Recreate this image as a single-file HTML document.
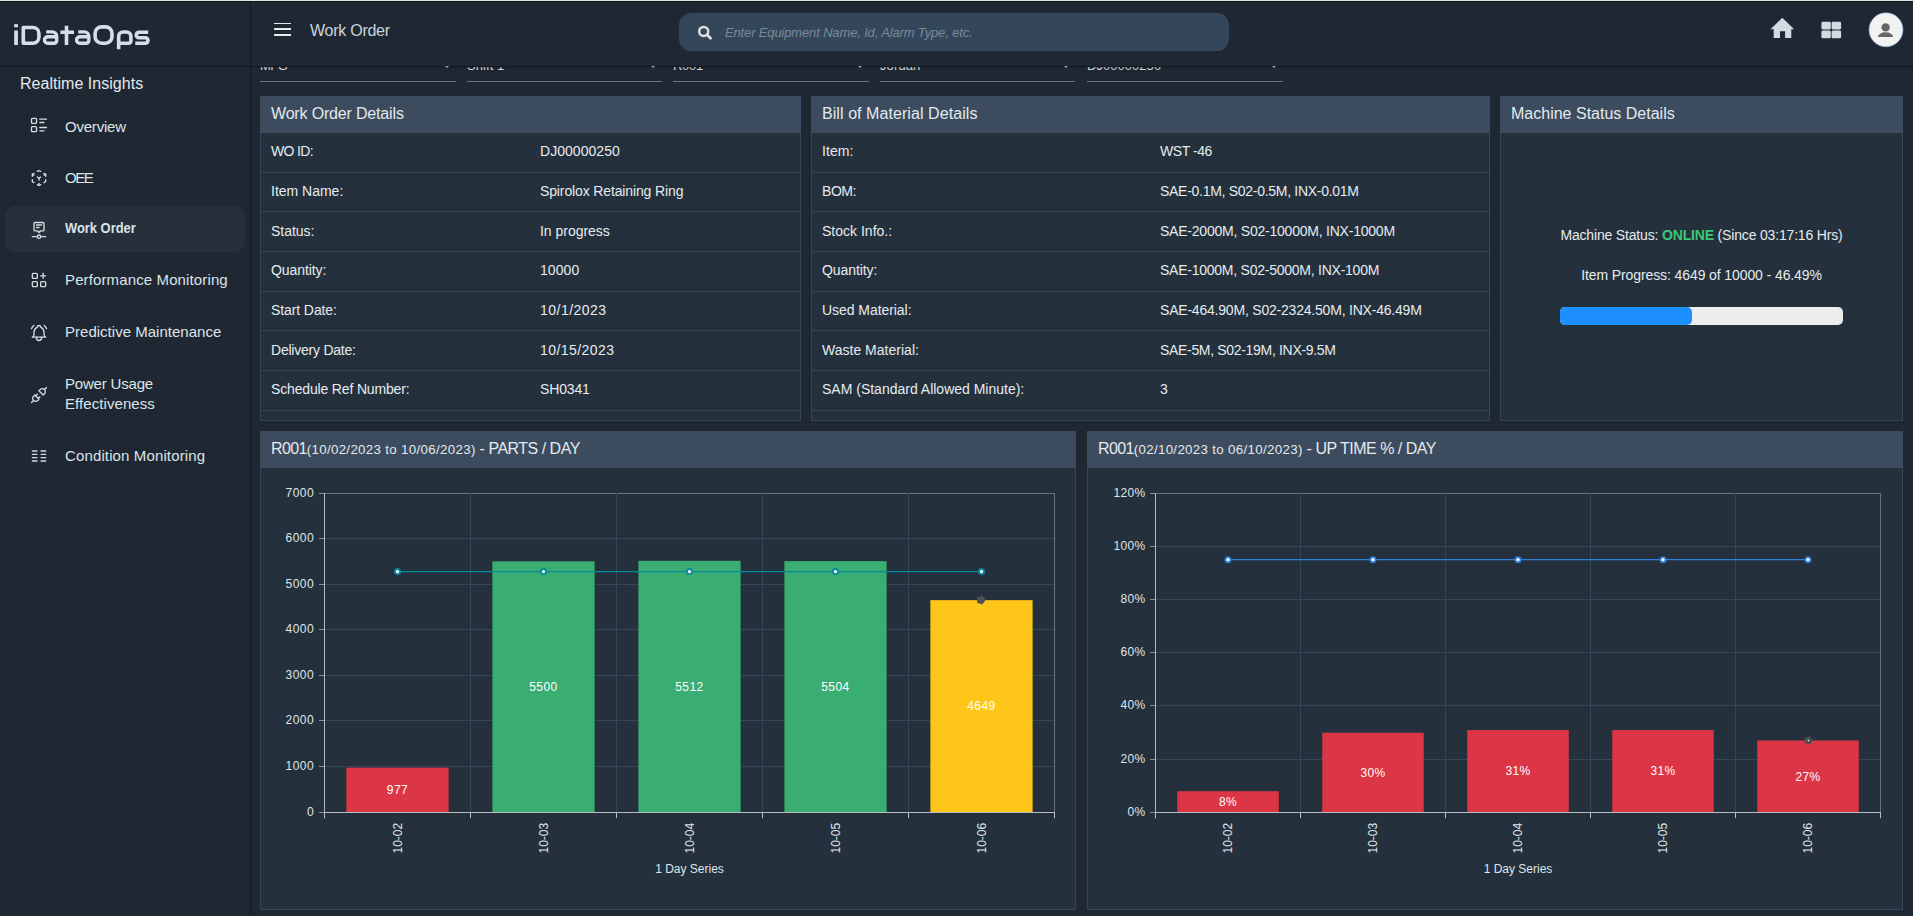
<!DOCTYPE html>
<html><head><meta charset="utf-8"><style>
*{box-sizing:border-box;margin:0;padding:0}
html,body{width:1913px;height:916px;overflow:hidden;background:#1f2832;font-family:"Liberation Sans",sans-serif;color:#dfe6ec}
.a{position:absolute}
.t{position:absolute;line-height:1;white-space:nowrap}
svg text{font-family:"Liberation Sans",sans-serif}
</style></head><body>
<div class="a" style="left:0;top:0;width:1913px;height:1px;background:#e4e4e4"></div>
<div class="a" style="left:0;top:1px;width:1913px;height:1px;background:#10151b"></div>
<div class="t" style="left:260px;top:59.00px;font-size:13px;color:#cfd6dd;letter-spacing:-0.497px">MFG</div>

<div class="a" style="left:260px;top:81px;width:196px;height:1px;background:#6b7580"></div>
<div class="t" style="left:467px;top:59.00px;font-size:13px;color:#cfd6dd;letter-spacing:0.070px">Shift 1</div>

<div class="a" style="left:467px;top:81px;width:195px;height:1px;background:#6b7580"></div>
<div class="t" style="left:673px;top:59.00px;font-size:13px;color:#cfd6dd;letter-spacing:-0.287px">R001</div>

<div class="a" style="left:673px;top:81px;width:196px;height:1px;background:#6b7580"></div>
<div class="t" style="left:880px;top:59.00px;font-size:13px;color:#cfd6dd;letter-spacing:0.118px">Jordan</div>

<div class="a" style="left:880px;top:81px;width:195px;height:1px;background:#6b7580"></div>
<div class="t" style="left:1087px;top:59.00px;font-size:13px;color:#cfd6dd;letter-spacing:0.043px">DJ00000250</div>

<div class="a" style="left:1087px;top:81px;width:196px;height:1px;background:#6b7580"></div>
<div class="a" style="left:0;top:2px;width:250px;height:914px;background:#1f2832"></div>
<div class="a" style="left:250px;top:2px;width:1px;height:914px;background:#141a21"></div>
<div class="a" style="left:251px;top:2px;width:1662px;height:64px;background:#1f2832"></div>
<div class="a" style="left:0;top:66px;width:1913px;height:1px;background:#121820"></div>
<div class="a" style="left:251px;top:67px;width:1662px;height:1px;background:rgba(0,0,0,0.12)"></div>
<div class="a" style="left:442px;top:66px;width:10px;height:4px;overflow:hidden"><div class="a" style="left:0;top:-2.7px;width:0;height:0;border-left:5px solid transparent;border-right:5px solid transparent;border-top:5px solid #98a1aa"></div></div>
<div class="a" style="left:648px;top:66px;width:10px;height:4px;overflow:hidden"><div class="a" style="left:0;top:-2.7px;width:0;height:0;border-left:5px solid transparent;border-right:5px solid transparent;border-top:5px solid #98a1aa"></div></div>
<div class="a" style="left:855px;top:66px;width:10px;height:4px;overflow:hidden"><div class="a" style="left:0;top:-2.7px;width:0;height:0;border-left:5px solid transparent;border-right:5px solid transparent;border-top:5px solid #98a1aa"></div></div>
<div class="a" style="left:1061px;top:66px;width:10px;height:4px;overflow:hidden"><div class="a" style="left:0;top:-2.7px;width:0;height:0;border-left:5px solid transparent;border-right:5px solid transparent;border-top:5px solid #98a1aa"></div></div>
<div class="a" style="left:1269px;top:66px;width:10px;height:4px;overflow:hidden"><div class="a" style="left:0;top:-2.7px;width:0;height:0;border-left:5px solid transparent;border-right:5px solid transparent;border-top:5px solid #98a1aa"></div></div>
<svg class="a" style="left:0;top:0" width="160" height="60" viewBox="0 0 160 60">
<g fill="none" stroke="#d6dfe7" stroke-width="3.6" stroke-linejoin="round">
<path d="M23.3,27.5 H33 A5.9,5.9 0 0 1 38.9,33.4 V37.3 A5.9,5.9 0 0 1 33,43.2 H23.3 Z"/>
<path stroke-width="3.4" d="M46.2,31.9 H52.2 A4.5,4.5 0 0 1 56.7,36.4 V40.6 A2.7,2.7 0 0 1 54,43.3 H47.8 A3.3,3.3 0 0 1 47.8,36.7 H56.7"/>
<path d="M66.5,25.7 V45 M60.4,32.2 H74"/>
<path stroke-width="3.4" d="M78.3,31.9 H84.3 A4.5,4.5 0 0 1 88.8,36.4 V40.6 A2.7,2.7 0 0 1 86.1,43.3 H79.9 A3.3,3.3 0 0 1 79.9,36.7 H88.8"/>
<path d="M101.6,26.9 H105.5 A6.5,6.5 0 0 1 112,33.4 V36.7 A6.5,6.5 0 0 1 105.5,43.2 H101.6 A6.5,6.5 0 0 1 95.1,36.7 V33.4 A6.5,6.5 0 0 1 101.6,26.9 Z"/>
<path d="M118.65,49.2 V36.4 A4.4,4.4 0 0 1 123,32 H126.5 A4.4,4.4 0 0 1 130.9,36.4 V41 A2.2,2.2 0 0 1 128.7,43.2 H118.65"/>
<path d="M148.2,32.3 H139 A2.75,2.75 0 0 0 139,37.8 H145.3 A2.7,2.7 0 0 1 145.3,43.2 H135.3"/>
</g>
<g fill="#d6dfe7"><rect x="14.2" y="24.1" width="3.7" height="3.2"/><rect x="14.2" y="30.5" width="3.7" height="14.5"/></g>
</svg>
<div class="t" style="left:20px;top:75.66px;font-size:16px;color:#e2e8ee;letter-spacing:0.027px">Realtime Insights</div>

<div class="a" style="left:5px;top:206px;width:240px;height:46px;background:#25303b;border-radius:11px"></div>
<div class="t" style="left:65px;top:118.60px;font-size:15px;color:#dce3ea;letter-spacing:-0.214px">Overview</div>

<div class="t" style="left:65px;top:170.30px;font-size:15px;color:#dce3ea;letter-spacing:-1.435px">OEE</div>

<div class="t" style="left:65px;top:221.05px;font-size:14px;color:#dce3ea;font-weight:bold;letter-spacing:0;transform:scaleX(0.922);transform-origin:0 0">Work Order</div>

<div class="t" style="left:65px;top:272.00px;font-size:15px;color:#dce3ea;letter-spacing:0.125px">Performance Monitoring</div>

<div class="t" style="left:65px;top:324.30px;font-size:15px;color:#dce3ea;letter-spacing:0.017px">Predictive Maintenance</div>

<div class="t" style="left:65px;top:376.20px;font-size:15px;color:#dce3ea;letter-spacing:-0.190px">Power Usage</div>

<div class="t" style="left:65px;top:395.70px;font-size:15px;color:#dce3ea;letter-spacing:0.070px">Effectiveness</div>

<div class="t" style="left:65px;top:448.20px;font-size:15px;color:#dce3ea;letter-spacing:0.129px">Condition Monitoring</div>

<svg class="a" style="left:29.2px;top:115.2px" width="20" height="20" viewBox="0 0 24 24"><g fill="none" stroke="#d4dbe2" stroke-width="1.6" stroke-linecap="round" stroke-linejoin="round"><path d="M13 5h8"/><path d="M13 9h5"/><path d="M13 15h8"/><path d="M13 19h5"/><path d="M3 5a1 1 0 0 1 1 -1h4a1 1 0 0 1 1 1v4a1 1 0 0 1 -1 1h-4a1 1 0 0 1 -1 -1z"/><path d="M3 15a1 1 0 0 1 1 -1h4a1 1 0 0 1 1 1v4a1 1 0 0 1 -1 1h-4a1 1 0 0 1 -1 -1z"/></g></svg>
<svg class="a" style="left:29.3px;top:167.5px" width="20" height="20" viewBox="0 0 24 24"><g fill="none" stroke="#d4dbe2" stroke-width="1.6" stroke-linecap="round" stroke-linejoin="round"><path d="M6 17.6l-2 -1.1v-2.5"/><path d="M4 10v-2.5l2 -1.1"/><path d="M10 4.1l2 -1.1l2 1.1"/><path d="M18 6.4l2 1.1v2.5"/><path d="M20 14v2.5l-2 1.12"/><path d="M14 19.9l-2 1.1l-2 -1.1"/><path d="M12 12l2 -1.1"/><path d="M18 8.6l2 -1.1"/><path d="M12 12l0 2.5"/><path d="M12 18.5l0 2.5"/><path d="M12 12l-2 -1.12"/><path d="M6 8.6l-2 -1.1"/></g></svg>
<svg class="a" style="left:29.3px;top:219.5px" width="20" height="20" viewBox="0 0 24 24"><g fill="none" stroke="#d4dbe2" stroke-width="1.6" stroke-linecap="round" stroke-linejoin="round"><path d="M10 20a2 2 0 1 0 4 0a2 2 0 1 0 -4 0"/><path d="M10 20h-6"/><path d="M14 20h6"/><path d="M12 15l-2 -2h-3a1 1 0 0 1 -1 -1v-8a1 1 0 0 1 1 -1h10a1 1 0 0 1 1 1v8a1 1 0 0 1 -1 1h-3l-2 2z"/><path d="M9 6h6"/><path d="M9 9h3"/></g></svg>
<svg class="a" style="left:29.2px;top:270.4px" width="20" height="20" viewBox="0 0 24 24"><g fill="none" stroke="#d4dbe2" stroke-width="1.6" stroke-linecap="round" stroke-linejoin="round"><path d="M4 5a1 1 0 0 1 1 -1h4a1 1 0 0 1 1 1v4a1 1 0 0 1 -1 1h-4a1 1 0 0 1 -1 -1z"/><path d="M4 15a1 1 0 0 1 1 -1h4a1 1 0 0 1 1 1v4a1 1 0 0 1 -1 1h-4a1 1 0 0 1 -1 -1z"/><path d="M14 15a1 1 0 0 1 1 -1h4a1 1 0 0 1 1 1v4a1 1 0 0 1 -1 1h-4a1 1 0 0 1 -1 -1z"/><path d="M14 7l6 0"/><path d="M17 4l0 6"/></g></svg>
<svg class="a" style="left:29.3px;top:322.5px" width="20" height="20" viewBox="0 0 24 24"><g fill="none" stroke="#d4dbe2" stroke-width="1.6" stroke-linecap="round" stroke-linejoin="round"><path d="M10 5a2 2 0 0 1 4 0a7 7 0 0 1 4 6v3a4 4 0 0 0 2 3h-16a4 4 0 0 0 2 -3v-3a7 7 0 0 1 4 -6"/><path d="M9 17v1a3 3 0 0 0 6 0v-1"/><path d="M21 6.727a11.05 11.05 0 0 0 -2.794 -3.727"/><path d="M3 6.727a11.05 11.05 0 0 1 2.792 -3.727"/></g></svg>
<svg class="a" style="left:29.4px;top:384.9px" width="20" height="20" viewBox="0 0 24 24"><g fill="none" stroke="#d4dbe2" stroke-width="1.6" stroke-linecap="round" stroke-linejoin="round"><path d="M7 12l5 5l-1.5 1.5a3.536 3.536 0 1 1 -5 -5l1.5 -1.5z"/><path d="M17 12l-5 -5l1.5 -1.5a3.536 3.536 0 1 1 5 5l-1.5 1.5z"/><path d="M3 21l2.5 -2.5"/><path d="M18.5 5.5l2.5 -2.5"/><path d="M10 11l-2 2"/><path d="M13 14l-2 2"/></g></svg>
<svg class="a" style="left:29.2px;top:446.1px" width="20" height="20" viewBox="0 0 24 24"><g fill="none" stroke="#d4dbe2" stroke-width="1.6" stroke-linecap="round" stroke-linejoin="round"><path d="M4 6l5.5 0"/><path d="M4 10l5.5 0"/><path d="M4 14l5.5 0"/><path d="M4 18l5.5 0"/><path d="M14.5 6l5.5 0"/><path d="M14.5 10l5.5 0"/><path d="M14.5 14l5.5 0"/><path d="M14.5 18l5.5 0"/></g></svg>
<div class="a" style="left:274px;top:22.9px;width:16.5px;height:1.5px;background:#e6eaee"></div>
<div class="a" style="left:274px;top:28.4px;width:16.5px;height:1.5px;background:#e6eaee"></div>
<div class="a" style="left:274px;top:34.1px;width:16.5px;height:1.5px;background:#e6eaee"></div>
<div class="t" style="left:310px;top:22.66px;font-size:16px;color:#cbd4dc;letter-spacing:-0.259px">Work Order</div>

<div class="a" style="left:679px;top:13px;width:550px;height:38px;background:#33465a;border-radius:12px"></div>
<svg class="a" style="left:690px;top:20px" width="30" height="26" viewBox="690 20 30 26"><g fill="none" stroke="#dedede" stroke-width="2.5"><circle cx="703.7" cy="31.4" r="4.5"/><path d="M707,34.7 L710.6,38.3" stroke-linecap="round" stroke-width="2.7"/></g></svg>
<div class="t" style="left:725px;top:25.50px;font-size:13px;font-style:italic;color:#7b8998;letter-spacing:-0.145px">Enter Equipment Name, Id, Alarm Type, etc.</div>

<svg class="a" style="left:1760px;top:8px" width="153" height="50" viewBox="1760 8 153 50">
<path d="M1782.3,17.7 L1794.2,29.3 H1791.3 V38.1 H1785.1 V31.3 H1780 V38.1 H1773.7 V29.3 H1770.5 Z" fill="#d1dbe4"/>
<g fill="#d1dbe4"><rect x="1821.4" y="21.7" width="9.4" height="7.8" rx="1.4"/><rect x="1831.6" y="21.7" width="9.5" height="7.8" rx="1.4"/><rect x="1821.4" y="30.5" width="9.4" height="7.8" rx="1.4"/><rect x="1831.6" y="30.5" width="9.5" height="7.8" rx="1.4"/></g>
<circle cx="1886" cy="29.8" r="17" fill="#f2f2f2" stroke="#7fa8cf" stroke-width="0.6"/>
<circle cx="1885.6" cy="27.4" r="4.2" fill="#666"/>
<path d="M1877.9,37.1 A7.6,4.8 0 0 1 1893.1,37.1 Z" fill="#666"/>
</svg>
<div class="a" style="left:260px;top:96px;width:541px;height:325px;background:#24313c;border:1px solid #33465a"></div>
<div class="a" style="left:260px;top:96px;width:541px;height:37px;background:#3c4c5e"></div>
<div class="a" style="left:811px;top:96px;width:679px;height:325px;background:#24313c;border:1px solid #33465a"></div>
<div class="a" style="left:811px;top:96px;width:679px;height:37px;background:#3c4c5e"></div>
<div class="a" style="left:1500px;top:96px;width:403px;height:325px;background:#24313c;border:1px solid #33465a"></div>
<div class="a" style="left:1500px;top:96px;width:403px;height:37px;background:#3c4c5e"></div>
<div class="a" style="left:260px;top:431px;width:816px;height:479px;background:#24313c;border:1px solid #33465a"></div>
<div class="a" style="left:260px;top:431px;width:816px;height:37px;background:#3c4c5e"></div>
<div class="a" style="left:1087px;top:431px;width:816px;height:479px;background:#24313c;border:1px solid #33465a"></div>
<div class="a" style="left:1087px;top:431px;width:816px;height:37px;background:#3c4c5e"></div>
<div class="t" style="left:271px;top:105.56px;font-size:16px;color:#e3e9ee;letter-spacing:-0.168px">Work Order Details</div>

<div class="t" style="left:822px;top:105.56px;font-size:16px;color:#e3e9ee;letter-spacing:0.069px">Bill of Material Details</div>

<div class="t" style="left:1511px;top:105.56px;font-size:16px;color:#e3e9ee;letter-spacing:0.004px">Machine Status Details</div>

<div class="t" style="left:271px;top:144.45px;font-size:14px;color:#e6ebef;letter-spacing:-0.662px">WO ID:</div>

<div class="t" style="left:540px;top:144.45px;font-size:14px;color:#e6ebef;letter-spacing:0.046px">DJ00000250</div>

<div class="t" style="left:271px;top:184.12px;font-size:14px;color:#e6ebef;letter-spacing:-0.009px">Item Name:</div>

<div class="t" style="left:540px;top:184.12px;font-size:14px;color:#e6ebef;letter-spacing:-0.130px">Spirolox Retaining Ring</div>

<div class="t" style="left:271px;top:223.79px;font-size:14px;color:#e6ebef;letter-spacing:-0.022px">Status:</div>

<div class="t" style="left:540px;top:223.79px;font-size:14px;color:#e6ebef;letter-spacing:-0.020px">In progress</div>

<div class="t" style="left:271px;top:263.46px;font-size:14px;color:#e6ebef;letter-spacing:-0.083px">Quantity:</div>

<div class="t" style="left:540px;top:263.46px;font-size:14px;color:#e6ebef;letter-spacing:0.082px">10000</div>

<div class="t" style="left:271px;top:303.13px;font-size:14px;color:#e6ebef;letter-spacing:-0.097px">Start Date:</div>

<div class="t" style="left:540px;top:303.13px;font-size:14px;color:#e6ebef;letter-spacing:0.483px">10/1/2023</div>

<div class="t" style="left:271px;top:342.80px;font-size:14px;color:#e6ebef;letter-spacing:-0.230px">Delivery Date:</div>

<div class="t" style="left:540px;top:342.80px;font-size:14px;color:#e6ebef;letter-spacing:0.443px">10/15/2023</div>

<div class="t" style="left:271px;top:382.47px;font-size:14px;color:#e6ebef;letter-spacing:-0.157px">Schedule Ref Number:</div>

<div class="t" style="left:540px;top:382.47px;font-size:14px;color:#e6ebef;letter-spacing:-0.137px">SH0341</div>

<div class="t" style="left:822px;top:144.45px;font-size:14px;color:#e6ebef;letter-spacing:0.073px">Item:</div>

<div class="t" style="left:1160px;top:144.45px;font-size:14px;color:#e6ebef;letter-spacing:-0.440px">WST -46</div>

<div class="t" style="left:822px;top:184.12px;font-size:14px;color:#e6ebef;letter-spacing:-0.453px">BOM:</div>

<div class="t" style="left:1160px;top:184.12px;font-size:14px;color:#e6ebef;letter-spacing:-0.285px">SAE-0.1M, S02-0.5M, INX-0.01M</div>

<div class="t" style="left:822px;top:223.79px;font-size:14px;color:#e6ebef;letter-spacing:0.006px">Stock Info.:</div>

<div class="t" style="left:1160px;top:223.79px;font-size:14px;color:#e6ebef;letter-spacing:-0.224px">SAE-2000M, S02-10000M, INX-1000M</div>

<div class="t" style="left:822px;top:263.46px;font-size:14px;color:#e6ebef;letter-spacing:-0.083px">Quantity:</div>

<div class="t" style="left:1160px;top:263.46px;font-size:14px;color:#e6ebef;letter-spacing:-0.245px">SAE-1000M, S02-5000M, INX-100M</div>

<div class="t" style="left:822px;top:303.13px;font-size:14px;color:#e6ebef;letter-spacing:-0.054px">Used Material:</div>

<div class="t" style="left:1160px;top:303.13px;font-size:14px;color:#e6ebef;letter-spacing:-0.206px">SAE-464.90M, S02-2324.50M, INX-46.49M</div>

<div class="t" style="left:822px;top:342.80px;font-size:14px;color:#e6ebef;letter-spacing:0.013px">Waste Material:</div>

<div class="t" style="left:1160px;top:342.80px;font-size:14px;color:#e6ebef;letter-spacing:-0.321px">SAE-5M, S02-19M, INX-9.5M</div>

<div class="t" style="left:822px;top:382.47px;font-size:14px;color:#e6ebef;letter-spacing:-0.002px">SAM (Standard Allowed Minute):</div>

<div class="t" style="left:1160px;top:382.47px;font-size:14px;color:#e6ebef;letter-spacing:0.082px">3</div>

<div class="a" style="left:261px;top:172px;width:539px;height:1px;background:#334658"></div>
<div class="a" style="left:812px;top:172px;width:677px;height:1px;background:#334658"></div>
<div class="a" style="left:261px;top:211px;width:539px;height:1px;background:#334658"></div>
<div class="a" style="left:812px;top:211px;width:677px;height:1px;background:#334658"></div>
<div class="a" style="left:261px;top:251px;width:539px;height:1px;background:#334658"></div>
<div class="a" style="left:812px;top:251px;width:677px;height:1px;background:#334658"></div>
<div class="a" style="left:261px;top:291px;width:539px;height:1px;background:#334658"></div>
<div class="a" style="left:812px;top:291px;width:677px;height:1px;background:#334658"></div>
<div class="a" style="left:261px;top:330px;width:539px;height:1px;background:#334658"></div>
<div class="a" style="left:812px;top:330px;width:677px;height:1px;background:#334658"></div>
<div class="a" style="left:261px;top:370px;width:539px;height:1px;background:#334658"></div>
<div class="a" style="left:812px;top:370px;width:677px;height:1px;background:#334658"></div>
<div class="a" style="left:261px;top:410px;width:539px;height:1px;background:#334658"></div>
<div class="a" style="left:812px;top:410px;width:677px;height:1px;background:#334658"></div>
<div class="t" style="left:1401.50px;width:600px;text-align:center;top:228.45px;font-size:14px;color:#e6ebef;letter-spacing:-0.17px">Machine Status: <b style="color:#3ec774">ONLINE</b> (Since 03:17:16 Hrs)</div>

<div class="t" style="left:1401.50px;width:600px;text-align:center;top:268.15px;font-size:14px;color:#e6ebef;letter-spacing:-0.1px">Item Progress: 4649 of 10000 - 46.49%</div>

<div class="a" style="left:1560px;top:307px;width:283px;height:18px;background:#ececec;border-radius:5px"></div>
<div class="a" style="left:1560px;top:307px;width:132px;height:18px;background:#1e8fff;border-radius:5px"></div>
<div class="t" style="left:271px;top:441.46px;font-size:16px;color:#e3e9ee"><span style="font-size:16px;letter-spacing:-0.637px">R001</span><span style="font-size:13.3px;letter-spacing:0.328px">(10/02/2023 to 10/06/2023)</span><span style="font-size:16px;letter-spacing:-0.498px"> - PARTS / DAY</span></div>
<div class="t" style="left:1098px;top:441.46px;font-size:16px;color:#e3e9ee"><span style="font-size:16px;letter-spacing:-0.637px">R001</span><span style="font-size:13.3px;letter-spacing:0.328px">(02/10/2023 to 06/10/2023)</span><span style="font-size:16px;letter-spacing:-0.496px"> - UP TIME % / DAY</span></div>
<svg class="a" style="left:0;top:0" width="1913" height="916" viewBox="0 0 1913 916">
<line x1="324.5" y1="812.50" x2="1054.5" y2="812.50" stroke="#b9bcbf" stroke-width="1"/>
<line x1="319.0" y1="812.50" x2="324.5" y2="812.50" stroke="#8a9096" stroke-width="1"/>
<text x="314.1" y="816.00" text-anchor="end" font-size="12" letter-spacing="0.45" fill="#dfe5ea">0</text>
<line x1="324.5" y1="766.50" x2="1054.5" y2="766.50" stroke="#34475a" stroke-width="1"/>
<line x1="319.0" y1="766.50" x2="324.5" y2="766.50" stroke="#8a9096" stroke-width="1"/>
<text x="314.1" y="770.00" text-anchor="end" font-size="12" letter-spacing="0.45" fill="#dfe5ea">1000</text>
<line x1="324.5" y1="720.50" x2="1054.5" y2="720.50" stroke="#34475a" stroke-width="1"/>
<line x1="319.0" y1="720.50" x2="324.5" y2="720.50" stroke="#8a9096" stroke-width="1"/>
<text x="314.1" y="724.00" text-anchor="end" font-size="12" letter-spacing="0.45" fill="#dfe5ea">2000</text>
<line x1="324.5" y1="675.50" x2="1054.5" y2="675.50" stroke="#34475a" stroke-width="1"/>
<line x1="319.0" y1="675.50" x2="324.5" y2="675.50" stroke="#8a9096" stroke-width="1"/>
<text x="314.1" y="679.00" text-anchor="end" font-size="12" letter-spacing="0.45" fill="#dfe5ea">3000</text>
<line x1="324.5" y1="629.50" x2="1054.5" y2="629.50" stroke="#34475a" stroke-width="1"/>
<line x1="319.0" y1="629.50" x2="324.5" y2="629.50" stroke="#8a9096" stroke-width="1"/>
<text x="314.1" y="633.00" text-anchor="end" font-size="12" letter-spacing="0.45" fill="#dfe5ea">4000</text>
<line x1="324.5" y1="584.50" x2="1054.5" y2="584.50" stroke="#34475a" stroke-width="1"/>
<line x1="319.0" y1="584.50" x2="324.5" y2="584.50" stroke="#8a9096" stroke-width="1"/>
<text x="314.1" y="588.00" text-anchor="end" font-size="12" letter-spacing="0.45" fill="#dfe5ea">5000</text>
<line x1="324.5" y1="538.50" x2="1054.5" y2="538.50" stroke="#34475a" stroke-width="1"/>
<line x1="319.0" y1="538.50" x2="324.5" y2="538.50" stroke="#8a9096" stroke-width="1"/>
<text x="314.1" y="542.00" text-anchor="end" font-size="12" letter-spacing="0.45" fill="#dfe5ea">6000</text>
<line x1="324.5" y1="493.50" x2="1054.5" y2="493.50" stroke="#6b737b" stroke-width="1"/>
<line x1="319.0" y1="493.50" x2="324.5" y2="493.50" stroke="#8a9096" stroke-width="1"/>
<text x="314.1" y="497.00" text-anchor="end" font-size="12" letter-spacing="0.45" fill="#dfe5ea">7000</text>
<line x1="470.50" y1="492.9" x2="470.50" y2="812.2" stroke="#34475a" stroke-width="1"/>
<line x1="616.50" y1="492.9" x2="616.50" y2="812.2" stroke="#34475a" stroke-width="1"/>
<line x1="762.50" y1="492.9" x2="762.50" y2="812.2" stroke="#34475a" stroke-width="1"/>
<line x1="908.50" y1="492.9" x2="908.50" y2="812.2" stroke="#34475a" stroke-width="1"/>
<rect x="346.40" y="767.63" width="102.20" height="44.57" fill="#dc3545"/>
<rect x="492.40" y="561.32" width="102.20" height="250.88" fill="#3aad73"/>
<rect x="638.40" y="560.77" width="102.20" height="251.43" fill="#3aad73"/>
<rect x="784.40" y="561.14" width="102.20" height="251.06" fill="#3aad73"/>
<rect x="930.40" y="600.14" width="102.20" height="212.06" fill="#ffc61a"/>
<line x1="324.5" y1="492.9" x2="324.5" y2="818.2" stroke="#b9bcbf" stroke-width="1"/>
<line x1="1054.5" y1="492.9" x2="1054.5" y2="818.2" stroke="#6b737b" stroke-width="1"/>
<line x1="324.5" y1="812.5" x2="1054.5" y2="812.5" stroke="#b9bcbf" stroke-width="1"/>
<line x1="324.50" y1="812.2" x2="324.50" y2="818.2" stroke="#b9bcbf" stroke-width="1"/>
<line x1="470.50" y1="812.2" x2="470.50" y2="818.2" stroke="#b9bcbf" stroke-width="1"/>
<line x1="616.50" y1="812.2" x2="616.50" y2="818.2" stroke="#b9bcbf" stroke-width="1"/>
<line x1="762.50" y1="812.2" x2="762.50" y2="818.2" stroke="#b9bcbf" stroke-width="1"/>
<line x1="908.50" y1="812.2" x2="908.50" y2="818.2" stroke="#b9bcbf" stroke-width="1"/>
<line x1="1054.50" y1="812.2" x2="1054.50" y2="818.2" stroke="#b9bcbf" stroke-width="1"/>
<text x="397.50" y="794.12" text-anchor="middle" font-size="12" letter-spacing="0.45" fill="#ffffff">977</text>
<text transform="translate(401.80,853.5) rotate(-90)" font-size="12" fill="#dfe5ea">10-02</text>
<text x="543.50" y="690.96" text-anchor="middle" font-size="12" letter-spacing="0.45" fill="#ffffff">5500</text>
<text transform="translate(547.80,853.5) rotate(-90)" font-size="12" fill="#dfe5ea">10-03</text>
<text x="689.50" y="690.69" text-anchor="middle" font-size="12" letter-spacing="0.45" fill="#ffffff">5512</text>
<text transform="translate(693.80,853.5) rotate(-90)" font-size="12" fill="#dfe5ea">10-04</text>
<text x="835.50" y="690.87" text-anchor="middle" font-size="12" letter-spacing="0.45" fill="#ffffff">5504</text>
<text transform="translate(839.80,853.5) rotate(-90)" font-size="12" fill="#dfe5ea">10-05</text>
<text x="981.50" y="710.37" text-anchor="middle" font-size="12" letter-spacing="0.45" fill="#ffffff">4649</text>
<text transform="translate(985.80,853.5) rotate(-90)" font-size="12" fill="#dfe5ea">10-06</text>
<line x1="397.50" y1="571.6" x2="981.50" y2="571.6" stroke="#078a9e" stroke-width="1.3"/>
<circle cx="397.50" cy="571.6" r="2.6" fill="#ffffff" stroke="#078a9e" stroke-width="1.8"/>
<circle cx="543.50" cy="571.6" r="2.6" fill="#ffffff" stroke="#078a9e" stroke-width="1.8"/>
<circle cx="689.50" cy="571.6" r="2.6" fill="#ffffff" stroke="#078a9e" stroke-width="1.8"/>
<circle cx="835.50" cy="571.6" r="2.6" fill="#ffffff" stroke="#078a9e" stroke-width="1.8"/>
<circle cx="981.50" cy="571.6" r="2.6" fill="#ffffff" stroke="#078a9e" stroke-width="1.8"/>
<polygon points="985.60,600.10 982.35,604.57 977.10,602.86 977.10,597.34 982.35,595.63" fill="#4f5051"/>
<text x="689.5" y="873.3" text-anchor="middle" font-size="12" fill="#dfe5ea">1 Day Series</text>
<line x1="1155.5" y1="812.50" x2="1880.5" y2="812.50" stroke="#b9bcbf" stroke-width="1"/>
<line x1="1150.0" y1="812.50" x2="1155.5" y2="812.50" stroke="#8a9096" stroke-width="1"/>
<text x="1145.6" y="816.00" text-anchor="end" font-size="12" letter-spacing="0.35" fill="#dfe5ea">0%</text>
<line x1="1155.5" y1="759.50" x2="1880.5" y2="759.50" stroke="#34475a" stroke-width="1"/>
<line x1="1150.0" y1="759.50" x2="1155.5" y2="759.50" stroke="#8a9096" stroke-width="1"/>
<text x="1145.6" y="763.00" text-anchor="end" font-size="12" letter-spacing="0.35" fill="#dfe5ea">20%</text>
<line x1="1155.5" y1="705.50" x2="1880.5" y2="705.50" stroke="#34475a" stroke-width="1"/>
<line x1="1150.0" y1="705.50" x2="1155.5" y2="705.50" stroke="#8a9096" stroke-width="1"/>
<text x="1145.6" y="709.00" text-anchor="end" font-size="12" letter-spacing="0.35" fill="#dfe5ea">40%</text>
<line x1="1155.5" y1="652.50" x2="1880.5" y2="652.50" stroke="#34475a" stroke-width="1"/>
<line x1="1150.0" y1="652.50" x2="1155.5" y2="652.50" stroke="#8a9096" stroke-width="1"/>
<text x="1145.6" y="656.00" text-anchor="end" font-size="12" letter-spacing="0.35" fill="#dfe5ea">60%</text>
<line x1="1155.5" y1="599.50" x2="1880.5" y2="599.50" stroke="#34475a" stroke-width="1"/>
<line x1="1150.0" y1="599.50" x2="1155.5" y2="599.50" stroke="#8a9096" stroke-width="1"/>
<text x="1145.6" y="603.00" text-anchor="end" font-size="12" letter-spacing="0.35" fill="#dfe5ea">80%</text>
<line x1="1155.5" y1="546.50" x2="1880.5" y2="546.50" stroke="#34475a" stroke-width="1"/>
<line x1="1150.0" y1="546.50" x2="1155.5" y2="546.50" stroke="#8a9096" stroke-width="1"/>
<text x="1145.6" y="550.00" text-anchor="end" font-size="12" letter-spacing="0.35" fill="#dfe5ea">100%</text>
<line x1="1155.5" y1="493.50" x2="1880.5" y2="493.50" stroke="#6b737b" stroke-width="1"/>
<line x1="1150.0" y1="493.50" x2="1155.5" y2="493.50" stroke="#8a9096" stroke-width="1"/>
<text x="1145.6" y="497.00" text-anchor="end" font-size="12" letter-spacing="0.35" fill="#dfe5ea">120%</text>
<line x1="1300.50" y1="493.3" x2="1300.50" y2="812.2" stroke="#34475a" stroke-width="1"/>
<line x1="1445.50" y1="493.3" x2="1445.50" y2="812.2" stroke="#34475a" stroke-width="1"/>
<line x1="1590.50" y1="493.3" x2="1590.50" y2="812.2" stroke="#34475a" stroke-width="1"/>
<line x1="1735.50" y1="493.3" x2="1735.50" y2="812.2" stroke="#34475a" stroke-width="1"/>
<rect x="1177.25" y="791.21" width="101.50" height="20.99" fill="#dc3545"/>
<rect x="1322.25" y="732.74" width="101.50" height="79.46" fill="#dc3545"/>
<rect x="1467.25" y="730.08" width="101.50" height="82.12" fill="#dc3545"/>
<rect x="1612.25" y="730.08" width="101.50" height="82.12" fill="#dc3545"/>
<rect x="1757.25" y="740.45" width="101.50" height="71.75" fill="#dc3545"/>
<line x1="1155.5" y1="493.3" x2="1155.5" y2="818.2" stroke="#b9bcbf" stroke-width="1"/>
<line x1="1880.5" y1="493.3" x2="1880.5" y2="818.2" stroke="#6b737b" stroke-width="1"/>
<line x1="1155.5" y1="812.5" x2="1880.5" y2="812.5" stroke="#b9bcbf" stroke-width="1"/>
<line x1="1155.50" y1="812.2" x2="1155.50" y2="818.2" stroke="#b9bcbf" stroke-width="1"/>
<line x1="1300.50" y1="812.2" x2="1300.50" y2="818.2" stroke="#b9bcbf" stroke-width="1"/>
<line x1="1445.50" y1="812.2" x2="1445.50" y2="818.2" stroke="#b9bcbf" stroke-width="1"/>
<line x1="1590.50" y1="812.2" x2="1590.50" y2="818.2" stroke="#b9bcbf" stroke-width="1"/>
<line x1="1735.50" y1="812.2" x2="1735.50" y2="818.2" stroke="#b9bcbf" stroke-width="1"/>
<line x1="1880.50" y1="812.2" x2="1880.50" y2="818.2" stroke="#b9bcbf" stroke-width="1"/>
<text x="1228.00" y="805.90" text-anchor="middle" font-size="12" letter-spacing="0.35" fill="#ffffff">8%</text>
<text transform="translate(1232.30,853.5) rotate(-90)" font-size="12" fill="#dfe5ea">10-02</text>
<text x="1373.00" y="776.67" text-anchor="middle" font-size="12" letter-spacing="0.35" fill="#ffffff">30%</text>
<text transform="translate(1377.30,853.5) rotate(-90)" font-size="12" fill="#dfe5ea">10-03</text>
<text x="1518.00" y="775.34" text-anchor="middle" font-size="12" letter-spacing="0.35" fill="#ffffff">31%</text>
<text transform="translate(1522.30,853.5) rotate(-90)" font-size="12" fill="#dfe5ea">10-04</text>
<text x="1663.00" y="775.34" text-anchor="middle" font-size="12" letter-spacing="0.35" fill="#ffffff">31%</text>
<text transform="translate(1667.30,853.5) rotate(-90)" font-size="12" fill="#dfe5ea">10-05</text>
<text x="1808.00" y="780.52" text-anchor="middle" font-size="12" letter-spacing="0.35" fill="#ffffff">27%</text>
<text transform="translate(1812.30,853.5) rotate(-90)" font-size="12" fill="#dfe5ea">10-06</text>
<line x1="1228.00" y1="559.65" x2="1808.00" y2="559.65" stroke="#2f7fdc" stroke-width="1.3"/>
<circle cx="1228.00" cy="559.65" r="2.6" fill="#ffffff" stroke="#2f7fdc" stroke-width="1.8"/>
<circle cx="1373.00" cy="559.65" r="2.6" fill="#ffffff" stroke="#2f7fdc" stroke-width="1.8"/>
<circle cx="1518.00" cy="559.65" r="2.6" fill="#ffffff" stroke="#2f7fdc" stroke-width="1.8"/>
<circle cx="1663.00" cy="559.65" r="2.6" fill="#ffffff" stroke="#2f7fdc" stroke-width="1.8"/>
<circle cx="1808.00" cy="559.65" r="2.6" fill="#ffffff" stroke="#2f7fdc" stroke-width="1.8"/>
<polygon points="1812.80,740.50 1809.76,744.68 1804.84,743.09 1804.84,737.91 1809.76,736.32" fill="#4a4f52"/>
<circle cx="1808.4" cy="740.5" r="0.8" fill="#ffffff"/>
<text x="1518" y="873.3" text-anchor="middle" font-size="12" fill="#dfe5ea">1 Day Series</text>
</svg>
</body></html>
